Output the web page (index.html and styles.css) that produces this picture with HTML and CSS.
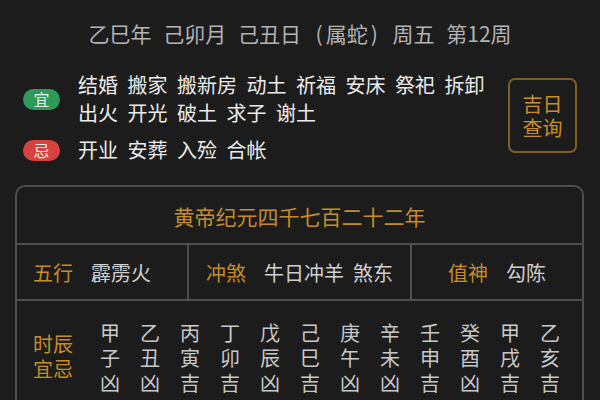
FILE: index.html
```html
<!DOCTYPE html>
<html lang="zh">
<head>
<meta charset="utf-8">
<link rel="stylesheet" href="styles.css">
</head>
<body>
<div class="page">
  <header class="date-line">乙巳年 己卯月 己丑日 <span class="paren">(</span>属蛇<span class="paren">)</span> 周五 第12周</header>

  <section class="almanac">
    <div class="rows">
      <div class="row">
        <span class="pill pill-yi">宜</span>
        <div class="items">
          <div class="line"><span>结婚</span><span>搬家</span><span>搬新房</span><span>动土</span><span>祈福</span><span>安床</span><span>祭祀</span><span>拆卸</span></div>
          <div class="line"><span>出火</span><span>开光</span><span>破土</span><span>求子</span><span>谢土</span></div>
        </div>
      </div>
      <div class="row row-ji">
        <span class="pill pill-ji">忌</span>
        <div class="items">
          <div class="line"><span>开业</span><span>安葬</span><span>入殓</span><span>合帐</span></div>
        </div>
      </div>
    </div>
    <div class="lucky-btn">吉日<br>查询</div>
  </section>

  <section class="table">
    <div class="t-title">黄帝纪元四千七百二十二年</div>
    <div class="t-info">
      <div class="cell cell-left"><span class="lbl">五行</span><span class="val">霹雳火</span></div>
      <div class="cell"><span class="lbl">冲煞</span><span class="val"><span>牛日冲羊</span><span>煞东</span></span></div>
      <div class="cell"><span class="lbl">值神</span><span class="val">勾陈</span></div>
    </div>
    <div class="t-hours">
      <div class="hours-label">时辰<br>宜忌</div>
      <div class="hours">
        <div class="hour">甲<br>子<br>凶</div>
        <div class="hour">乙<br>丑<br>凶</div>
        <div class="hour">丙<br>寅<br>吉</div>
        <div class="hour">丁<br>卯<br>吉</div>
        <div class="hour">戊<br>辰<br>凶</div>
        <div class="hour">己<br>巳<br>吉</div>
        <div class="hour">庚<br>午<br>凶</div>
        <div class="hour">辛<br>未<br>凶</div>
        <div class="hour">壬<br>申<br>吉</div>
        <div class="hour">癸<br>酉<br>凶</div>
        <div class="hour">甲<br>戌<br>吉</div>
        <div class="hour">乙<br>亥<br>吉</div>
      </div>
    </div>
  </section>
</div>
</body>
</html>
```

FILE: styles.css
```css
html, body {
  margin: 0;
  padding: 0;
  background: #1c1c1c;
  overflow: hidden;
}

body {
  font-family: "Noto Sans CJK SC", "Noto Sans", sans-serif;
  color: #e6e6e6;
}

.page {
  width: 600px;
  height: 400px;
  overflow: hidden;
}

.date-line {
  padding-top: 19px;
  height: 28px;
  line-height: 28px;
  font-size: 21px;
  text-align: center;
  color: #b4b4b4;
  word-spacing: 7px;
  white-space: nowrap;
}

.paren {
  margin: 0 3px;
}

.almanac {
  display: flex;
  justify-content: space-between;
  align-items: flex-start;
  padding: 0 23px;
  margin-top: 24px;
}

.rows {
  display: flex;
  flex-direction: column;
  gap: 9px;
}

.row {
  display: flex;
  align-items: center;
  gap: 18px;
}

.pill {
  width: 37px;
  height: 21px;
  border-radius: 11px;
  font-size: 16px;
  line-height: 21px;
  text-align: center;
  color: #e8efe9;
  flex: none;
}

.pill-yi {
  background: #2e9a5a;
}

.pill-ji {
  background: #d8423e;
}

.items {
  display: flex;
  flex-direction: column;
}

.line {
  display: flex;
  gap: 9.5px;
  font-size: 20px;
  line-height: 28px;
  color: #ececec;
  white-space: nowrap;
}

.lucky-btn {
  margin-top: 7px;
  width: 65px;
  height: 71px;
  border: 2px solid #7d5f24;
  border-radius: 7px;
  color: #c98f26;
  font-size: 20px;
  line-height: 24px;
  display: flex;
  align-items: center;
  justify-content: center;
  text-align: center;
  box-sizing: content-box;
}

.table {
  margin: 21px 16px 0 15px;
  border: 2px solid #4e4e4e;
  border-radius: 10px;
}

.t-title {
  height: 58px;
  padding-top: 2px;
  box-sizing: border-box;
  display: flex;
  align-items: center;
  justify-content: center;
  font-size: 21px;
  color: #c58d27;
  border-bottom: 2px solid #4e4e4e;
}

.t-info {
  display: grid;
  grid-template-columns: 170px 223px 1fr;
  height: 54px;
  border-bottom: 2px solid #4e4e4e;
}

.cell {
  display: flex;
  align-items: center;
  justify-content: center;
  gap: 18px;
  font-size: 20px;
}

.cell + .cell {
  border-left: 2px solid #4e4e4e;
}

.cell-left {
  justify-content: flex-start;
  padding-left: 16px;
}

.lbl {
  color: #c58d27;
}

.val {
  color: #cfcfcf;
  display: flex;
  gap: 9px;
}

.t-hours {
  display: flex;
  align-items: center;
  padding: 19px 0 20px 16px;
}

.hours-label {
  font-size: 20px;
  line-height: 25px;
  color: #c58d27;
  width: 40px;
  margin-right: 17px;
  margin-top: -3px;
}

.hours {
  display: grid;
  grid-template-columns: repeat(12, 40px);
}

.hour {
  font-size: 20px;
  line-height: 25px;
  text-align: center;
  color: #c8c8c8;
}
```
